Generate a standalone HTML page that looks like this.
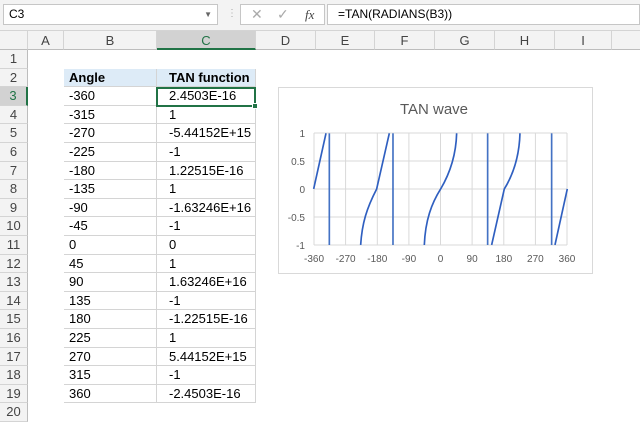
<!DOCTYPE html><html><head><style>
body{margin:0;width:640px;height:422px;overflow:hidden;background:#fff;font-family:"Liberation Sans",sans-serif;position:relative}
div{position:absolute;box-sizing:border-box}
.ch{top:31px;height:19px;font-size:13px;color:#444;text-align:center;line-height:19px;border-right:1px solid #d4d4d4;background:#f3f3f3;border-bottom:1px solid #bdbdbd}
.rh{left:0;width:28px;font-size:13px;color:#444;text-align:center;background:#f3f3f3;border-right:1px solid #bdbdbd;border-bottom:1px solid #d4d4d4}
.c{font-size:13px;color:#000;padding-left:5px;border-bottom:1px solid #d4d4d4;border-right:1px solid #d4d4d4}
</style></head><body>
<div style="left:0;top:0;width:640px;height:31px;background:#f3f3f3;border-bottom:1px solid #d4d4d4"></div>
<div style="left:3px;top:4px;width:215px;height:21px;background:#fff;border:1px solid #c6c6c6;font-size:12px;line-height:19px;padding-left:5px">C3<span style="position:absolute;right:5px;top:0;font-size:8px;color:#666">▼</span></div>
<div style="left:227px;top:8px;width:2px;height:14px;color:#aaa;font-size:10px">⋮</div>
<div style="left:240px;top:4px;width:85px;height:21px;background:#fff;border:1px solid #c6c6c6;color:#aaa;font-size:14px;line-height:19px"><span style="position:absolute;left:10px">✕</span><span style="position:absolute;left:36px">✓</span><span style="position:absolute;left:64px;color:#444;font-style:italic;font-family:'Liberation Serif';font-size:13px">fx</span></div>
<div style="left:327px;top:4px;width:313px;height:21px;background:#fff;border:1px solid #c6c6c6;font-size:12px;line-height:19px;padding-left:10px">=TAN(RADIANS(B3))</div>
<div class="ch" style="left:0;width:28px"></div>
<div class="ch" style="left:28px;width:36px">A</div>
<div class="ch" style="left:64px;width:93px">B</div>
<div class="ch" style="left:157px;width:99px;background:#d2d2d2;border-bottom:2px solid #217346;color:#217346">C</div>
<div class="ch" style="left:256px;width:60px">D</div>
<div class="ch" style="left:316px;width:59px">E</div>
<div class="ch" style="left:375px;width:60px">F</div>
<div class="ch" style="left:435px;width:60px">G</div>
<div class="ch" style="left:495px;width:60px">H</div>
<div class="ch" style="left:555px;width:57px">I</div>
<div class="ch" style="left:612px;width:28px;border-right:none"></div>
<div id="g"></div>
<script>
var rows=[["",""],["Angle","TAN function"],["-360","2.4503E-16"],["-315","1"],["-270","-5.44152E+15"],["-225","-1"],["-180","1.22515E-16"],["-135","1"],["-90","-1.63246E+16"],["-45","-1"],["0","0"],["45","1"],["90","1.63246E+16"],["135","-1"],["180","-1.22515E-16"],["225","1"],["270","5.44152E+15"],["315","-1"],["360","-2.4503E-16"],["",""]];
var h='';
for(var i=0;i<20;i++){var t=50+i*18.6,hh=18.6;
h+='<div class="rh" style="top:'+t+'px;height:'+hh+'px;line-height:'+hh+'px;'+(i==2?'background:#d2d2d2;color:#217346;border-right:2px solid #217346':'')+'">'+(i+1)+'</div>';
if(i>=1&&i<=18){var bg=i==1?'background:#ddebf7;font-weight:bold;':'';
h+='<div class="c" style="left:64px;top:'+t+'px;width:93px;height:'+hh+'px;line-height:'+hh+'px;'+bg+'">'+rows[i][0]+'</div>';
h+='<div class="c" style="left:157px;top:'+t+'px;width:99px;height:'+hh+'px;line-height:'+hh+'px;padding-left:12px;'+bg+'">'+rows[i][1]+'</div>';}}
document.getElementById('g').outerHTML=h;
</script>
<div style="left:156px;top:86.5px;width:100px;height:20px;border:2px solid #217346"></div>
<div style="left:252px;top:103px;width:6px;height:6px;background:#217346;border:1px solid #fff"></div>
<svg style="position:absolute;left:0;top:0" width="640" height="422">
<rect x="278.5" y="87.5" width="314" height="186" fill="#fff" stroke="#d9d9d9"/>
<text x="434" y="114" font-size="15" fill="#595959" text-anchor="middle" font-family="Liberation Sans">TAN wave</text>
<g stroke="#d9d9d9" stroke-width="1">
<line x1="314" y1="133" x2="567" y2="133"/><line x1="314" y1="161" x2="567" y2="161"/><line x1="314" y1="189" x2="567" y2="189"/><line x1="314" y1="217" x2="567" y2="217"/><line x1="314" y1="245" x2="567" y2="245"/>
<line x1="314" y1="133" x2="314" y2="245"/><line x1="345.6" y1="133" x2="345.6" y2="245"/><line x1="377.3" y1="133" x2="377.3" y2="245"/><line x1="408.9" y1="133" x2="408.9" y2="245"/><line x1="440.5" y1="133" x2="440.5" y2="245"/><line x1="472.1" y1="133" x2="472.1" y2="245"/><line x1="503.8" y1="133" x2="503.8" y2="245"/><line x1="535.4" y1="133" x2="535.4" y2="245"/><line x1="567" y1="133" x2="567" y2="245"/>
</g>
<g font-size="10" fill="#595959" font-family="Liberation Sans" text-anchor="end">
<text x="305" y="137">1</text><text x="305" y="165">0.5</text><text x="305" y="193">0</text><text x="305" y="221">-0.5</text><text x="305" y="249">-1</text></g>
<g font-size="10" fill="#595959" font-family="Liberation Sans" text-anchor="middle">
<text x="314" y="262">-360</text><text x="345.6" y="262">-270</text><text x="377.3" y="262">-180</text><text x="408.9" y="262">-90</text><text x="440.5" y="262">0</text><text x="472.1" y="262">90</text><text x="503.8" y="262">180</text><text x="535.4" y="262">270</text><text x="567" y="262">360</text></g>
<g transform="translate(270,80) scale(0.3333)" fill="none" stroke="#2f5fc0" stroke-width="5">
<path d="M131 327 L168 160"/>
<path d="M178 160 V495" stroke="#4472c4"/>
<path d="M272 495 C276 430 290 385 320 327 L358 160"/>
<path d="M369 160 V495" stroke="#4472c4"/>
<path d="M463 495 C466 420 485 370 512 327 C538 283 558 230 560 160"/>
<path d="M653 160 V495" stroke="#4472c4"/>
<path d="M665 495 L703 327 C730 283 748 230 750 160"/>
<path d="M845 160 V495" stroke="#4472c4"/>
<path d="M855 495 L892 327"/>
</g>
</svg>
</body></html>
